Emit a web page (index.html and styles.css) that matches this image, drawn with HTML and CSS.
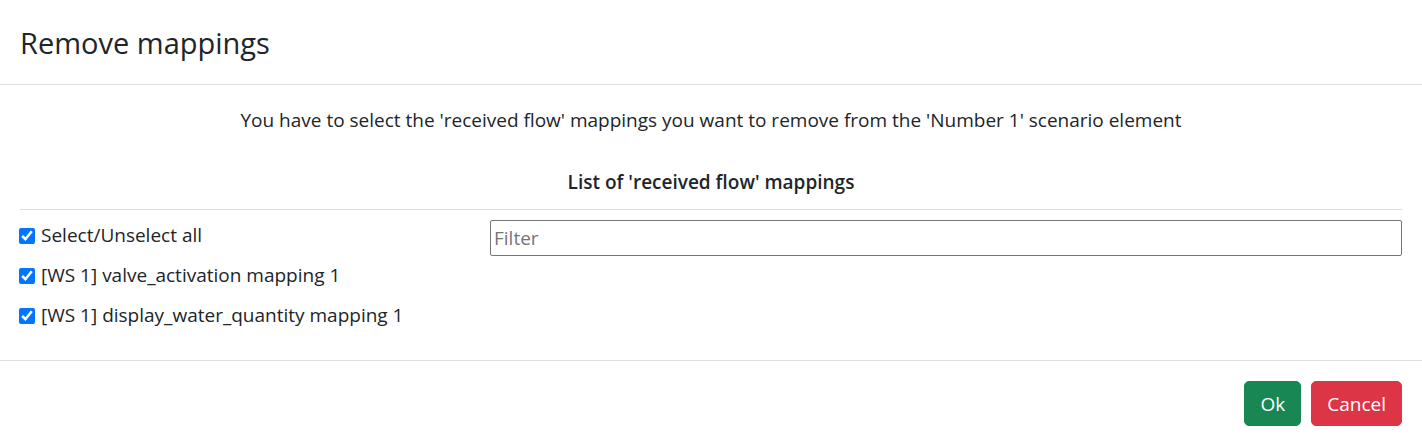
FILE: index.html
```
<!DOCTYPE html>
<html lang="en">
<head>
<meta charset="utf-8">
<title>Remove mappings</title>
<link rel="stylesheet" href="styles.css">
</head>
<body>
<div class="modal">
  <div class="modal-header">
    <h4 class="modal-title">Remove mappings</h4>
  </div>
  <div class="modal-body">
    <p class="intro">You have to select the 'received flow' mappings you want to remove from the 'Number 1' scenario element</p>
    <h6 class="list-title">List of 'received flow' mappings</h6>
    <hr class="sep">
    <div class="list-row">
      <div class="checks">
        <label class="check"><input type="checkbox" checked><span>Select/Unselect all</span></label>
        <label class="check"><input type="checkbox" checked><span>[WS 1] valve_activation mapping 1</span></label>
        <label class="check"><input type="checkbox" checked><span>[WS 1] display_water_quantity mapping 1</span></label>
      </div>
      <div class="filter-col">
        <input class="filter" type="text" placeholder="Filter">
      </div>
    </div>
  </div>
  <div class="modal-footer">
    <button class="btn btn-ok" type="button">Ok</button>
    <button class="btn btn-cancel" type="button">Cancel</button>
  </div>
</div>
</body>
</html>
```

FILE: styles.css
```
* { box-sizing: border-box; }

html, body {
  margin: 0;
  padding: 0;
  background: #ffffff;
}

body {
  font-family: "Open Sans", "Noto Sans", sans-serif;
  font-size: 19px;
  color: #212529;
}

.modal {
  width: 1422px;
  display: flex;
  flex-direction: column;
}

.modal-header {
  padding: 20px 20px 19px;
  border-bottom: 1px solid #dee2e6;
}

.modal-title {
  margin: 0;
  font-size: 29px;
  font-weight: 500;
  line-height: 45px;
}

.modal-body {
  padding: 20px 20px 20px;
}

.intro {
  margin: 0;
  text-align: center;
  line-height: 30px;
}

.list-title {
  margin: 35px 0 0;
  text-align: center;
  font-size: 19px;
  font-weight: 600;
  line-height: 24px;
}

.sep {
  margin: 15px 0 10px;
  border: 0;
  border-top: 1px solid #dcdfe2;
  height: 0;
}

.list-row {
  display: flex;
  align-items: flex-start;
}

.checks {
  width: 470px;
  flex: 0 0 470px;
  display: flex;
  flex-direction: column;
}

.check {
  display: flex;
  align-items: center;
  height: 30px;
  margin-bottom: 10px;
  line-height: 30px;
}

.check input {
  width: 16px;
  height: 16px;
  margin: 2px 6px 0 -1px;
  accent-color: #0075ff;
}

.filter-col {
  flex: 1 1 auto;
}

.filter {
  display: block;
  width: 100%;
  height: 36px;
  border: 1px solid #767676;
  border-radius: 2px;
  padding: 2px 3px;
  font-family: inherit;
  font-size: 19px;
  color: #212529;
  background: #ffffff;
}

.filter::placeholder {
  color: #757575;
}

.modal-footer {
  border-top: 1px solid #dee2e6;
  padding: 15px;
  display: flex;
  justify-content: flex-end;
}

.btn {
  margin: 5px;
  height: 45px;
  padding: 0 15px;
  border: 1px solid transparent;
  border-radius: 5px;
  font-family: inherit;
  font-size: 19px;
  line-height: 30px;
  color: #ffffff;
}

.btn-ok {
  background: #198754;
  border-color: #198754;
}

.btn-cancel {
  background: #dc3545;
  border-color: #dc3545;
}
```
